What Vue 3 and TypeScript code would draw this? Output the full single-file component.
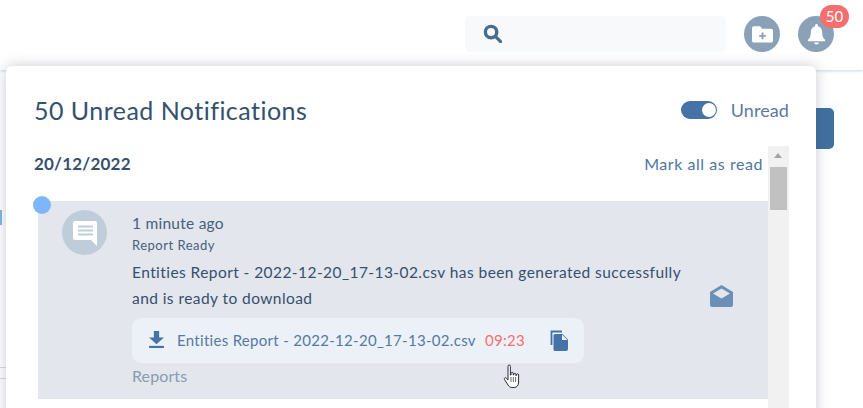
<script setup lang="ts">
const title = '50 Unread Notifications'
const fileName = 'Entities Report - 2022-12-20_17-13-02.csv'
</script>

<template>
  <div class="page">
    <header class="topbar">
      <div class="search">
        <svg class="search-icon" viewBox="0 0 20 20" width="19" height="19"><circle cx="8.500" cy="8.500" r="6" fill="none" stroke="#4a6c91" stroke-width="3.600"/><path d="M13 13l5.500 5.500" stroke="#4a6c91" stroke-width="3.400" stroke-linecap="round"/></svg>
      </div>
      <div class="round">
        <svg viewBox="0 0 22 18" width="21" height="18"><path d="M2 1h6.500l2 2.500H20a2 2 0 0 1 2 2V16a2 2 0 0 1-2 2H2a2 2 0 0 1-2-2V3a2 2 0 0 1 2-2z" fill="#fff"/><path d="M11 7.500v7M7.500 11h7" stroke="#8ba1b8" stroke-width="2"/></svg>
      </div>
      <div class="round bell">
        <svg viewBox="0 0 20 24" width="19" height="23"><path d="M10 1a1.500 1.500 0 0 1 1.500 1.500v.8C14.500 4 16 6.500 16 10c0 4 1 6 3 7.500V19H1v-1.500C3 16 4 14 4 10c0-3.500 1.500-6 4.500-6.700v-.8A1.500 1.500 0 0 1 10 1z" fill="#fff"/><path d="M7.500 20.500h5a2.500 2 0 0 1-5 0z" fill="#fff"/></svg>
        <span class="badge">50</span>
      </div>
    </header>

    <div class="behind-button"></div>
    <div class="behind-mark"></div>
    <div class="behind-line one"></div>
    <div class="behind-line two"></div>

    <section class="panel">
      <div class="panel-head">
        <h1>{{ title }}</h1>
        <div class="toggle-wrap">
          <span class="toggle"><i></i></span>
          <span class="toggle-label">Unread</span>
        </div>
      </div>
      <div class="scroller">
        <div class="list">
          <div class="date-row">
            <strong>20/12/2022</strong>
            <a>Mark all as read</a>
          </div>
          <article class="card">
            <span class="dot"></span>
            <div class="avatar">
              <svg viewBox="0 0 26 26" width="26" height="26"><path d="M3 1h20a2 2 0 0 1 2 2v23l-6-6H3a2 2 0 0 1-2-2V3a2 2 0 0 1 2-2z" fill="#fff"/><path d="M6 6.500h15M6 10.500h15M6 14.500h15" stroke="#bfcddb" stroke-width="2.200"/></svg>
            </div>
            <div class="content">
              <div class="time">1 minute ago</div>
              <div class="kind">Report Ready</div>
              <p>Entities Report - 2022-12-20_17-13-02.csv has been generated successfully and is ready to download</p>
              <div class="chip">
                <svg class="dl" viewBox="0 0 14 16" width="15" height="17"><path d="M4.500 0h5v6H14L7 12.500 0 6h4.500z" fill="#4572a7"/><rect y="14" width="14" height="2" fill="#4572a7"/></svg>
                <span class="file">{{ fileName }}</span>
                <span class="countdown">09:23</span>
                <svg class="copy" viewBox="0 0 18 21" width="18" height="21"><path d="M1.500 15V1.500H12" fill="none" stroke="#4572a7" stroke-width="1.800"/><path d="M5 4h7.500l5.500 5.500V19a2 2 0 0 1-2 2H5a1.500 1.500 0 0 1-1.500-1.500V5.500A1.500 1.500 0 0 1 5 4z" fill="#4572a7"/><path d="M12 4.500V10h5.500z" fill="#ecf1f7"/></svg>
              </div>
              <div class="source">Reports</div>
            </div>
            <svg class="envelope" viewBox="0 0 23 22" width="23" height="22"><path d="M11.500 0L23 7v13a2 2 0 0 1-2 2H2a2 2 0 0 1-2-2V7z" fill="#6a90b8"/><path d="M11.500 3.500L20 8.500l-8.500 5-8.500-5z" fill="#e3e6ec"/></svg>
          </article>
        </div>
        <div class="scrollbar">
          <span class="arrow"></span>
          <span class="thumb"></span>
        </div>
      </div>
    </section>

    <svg class="cursor" viewBox="0 0 18 25" width="18" height="25"><path d="M5 2.200a1.200 1.200 0 0 1 2.400 0V11h.6V9a1.200 1.200 0 0 1 2.200 0v2h.5V10a1.200 1.200 0 0 1 2.200 0v1.500h.5V11a1.100 1.100 0 0 1 2.200 0v7c0 3-1.500 5.500-4.500 5.500H9c-2 0-3-1-4-2.500L1.500 15.500c-.8-1.200.8-2.500 1.800-1.500L5 16z" fill="#fff" stroke="#2b2f38" stroke-width="1"/><path d="M8 13v5M10.300 13v5M12.600 13v5" stroke="#2b2f38" stroke-width=".7"/></svg>
  </div>
</template>

<style>
html, body { margin: 0; background: #fff; }
</style>

<style scoped>
.page {
  position: relative;
  width: 863px;
  height: 408px;
  overflow: hidden;
  background: #fff;
  font-family: "Lato", "Noto Sans", sans-serif;
  color: #34506f;
}
.topbar {
  height: 70px;
  box-sizing: border-box;
  padding: 16px 29px 0 465px;
  display: flex;
  align-items: flex-start;
  gap: 18px;
  background: #fff;
  box-shadow: 0 1px 3px #c9d5e4;
}
.search {
  width: 261px;
  height: 36px;
  box-sizing: border-box;
  padding: 8px 0 0 18px;
  background: #f8f9fb;
  border-radius: 5px;
}
.search-icon { display: block; }
.round {
  position: relative;
  width: 36px;
  height: 36px;
  border-radius: 50%;
  background: #8ba1b8;
  display: flex;
  align-items: center;
  justify-content: center;
}
.badge {
  position: absolute;
  left: 22px;
  top: -11px;
  width: 29px;
  height: 23px;
  border-radius: 12px;
  background: #f76e6e;
  color: #fff;
  font-size: 15px;
  line-height: 23px;
  text-align: center;
}
.behind-button {
  position: absolute;
  left: 790px;
  top: 108px;
  width: 44px;
  height: 41px;
  background: #41709f;
  border-radius: 5px;
}
.behind-mark {
  position: absolute;
  left: 0;
  top: 210px;
  width: 2px;
  height: 15px;
  background: #7fb6f0;
}
.behind-line {
  position: absolute;
  left: 0;
  width: 6px;
  height: 1px;
  background: #dcdcdc;
}
.behind-line.one { top: 367px; }
.behind-line.two { top: 378px; }
.panel {
  position: absolute;
  left: 6px;
  top: 66px;
  width: 810px;
  height: 360px;
  box-sizing: border-box;
  padding: 0 27px 0 28px;
  background: #fff;
  border-radius: 6px;
  box-shadow: 0 0 14px rgba(60, 70, 85, .28);
}
.panel-head {
  height: 80px;
  box-sizing: border-box;
  padding-top: 8px;
  display: flex;
  align-items: center;
  justify-content: space-between;
}
h1 {
  margin: 0;
  font-size: 25px;
  font-weight: 400;
  line-height: 30px;
  letter-spacing: .47px;
  color: #34506f;
}
.toggle-wrap { display: flex; align-items: center; gap: 14px; }
.toggle {
  width: 36px;
  height: 18px;
  border-radius: 9px;
  background: #4572a7;
  display: flex;
  justify-content: flex-end;
  align-items: center;
  padding-right: 1px;
  box-sizing: border-box;
}
.toggle i {
  width: 14px;
  height: 14px;
  border-radius: 50%;
  background: #fff;
  display: block;
}
.toggle-label { font-size: 18px; color: #5c7a9f; letter-spacing: .1px; }
.scroller { display: flex; align-items: flex-start; }
.list { width: 734px; flex: none; }
.date-row {
  height: 55px;
  display: flex;
  justify-content: space-between;
  padding-right: 5px;
  line-height: 36px;
}
.date-row strong { font-size: 17px; font-weight: 700; letter-spacing: .2px; color: #34506f; }
.date-row a { font-size: 16px; color: #4f75a0; letter-spacing: .55px; }
.card {
  position: relative;
  margin-left: 4px;
  height: 198px;
  display: flex;
  align-items: flex-start;
  padding: 9px 0 0 24px;
  box-sizing: border-box;
  background: #e3e6ec;
}
.dot {
  position: absolute;
  left: -5px;
  top: -5px;
  width: 18px;
  height: 18px;
  border-radius: 50%;
  background: #7fb6fb;
}
.avatar {
  width: 45px;
  height: 45px;
  flex: none;
  border-radius: 50%;
  background: #bfcddb;
  display: flex;
  align-items: center;
  justify-content: center;
  margin-right: 25px;
}
.content { width: 560px; flex: none; }
.time { font-size: 15.5px; line-height: 26px; letter-spacing: .25px; color: #46607e; }
.kind { font-size: 13px; line-height: 18px; margin-bottom: 5px; letter-spacing: .5px; color: #46607e; }
p {
  margin: 0 0 7px;
  font-size: 15.5px;
  line-height: 26px;
  width: 555px;
  letter-spacing: .43px;
}
.chip {
  width: 452px;
  height: 45px;
  box-sizing: border-box;
  padding: 0 0 2px 17px;
  display: flex;
  align-items: center;
  background: #ecf1f7;
  border-radius: 9px;
  font-size: 15px;
}
.dl { flex: none; margin-right: 13px; }
.file { color: #5479a5; width: 308px; flex: none; white-space: nowrap; letter-spacing: .3px; }
.countdown { color: #f76e6e; width: 65px; flex: none; letter-spacing: .3px; }
.copy { flex: none; margin-top: 2px; }
.source { margin-top: 3px; font-size: 16px; line-height: 20px; letter-spacing: .1px; color: #8a9bb0; }
.envelope { position: absolute; left: 672px; top: 84px; }
.scrollbar {
  position: relative;
  width: 21px;
  height: 262px;
  background: #f1f1f1;
  flex: none;
}
.arrow {
  position: absolute;
  left: 6px;
  top: 7px;
  width: 0;
  height: 0;
  border-left: 4.500px solid transparent;
  border-right: 4.500px solid transparent;
  border-bottom: 5px solid #a3a3a3;
}
.thumb {
  position: absolute;
  left: 2px;
  top: 21px;
  width: 17px;
  height: 43px;
  background: #c1c1c1;
}
.cursor { position: absolute; left: 503px; top: 364px; }
</style>
